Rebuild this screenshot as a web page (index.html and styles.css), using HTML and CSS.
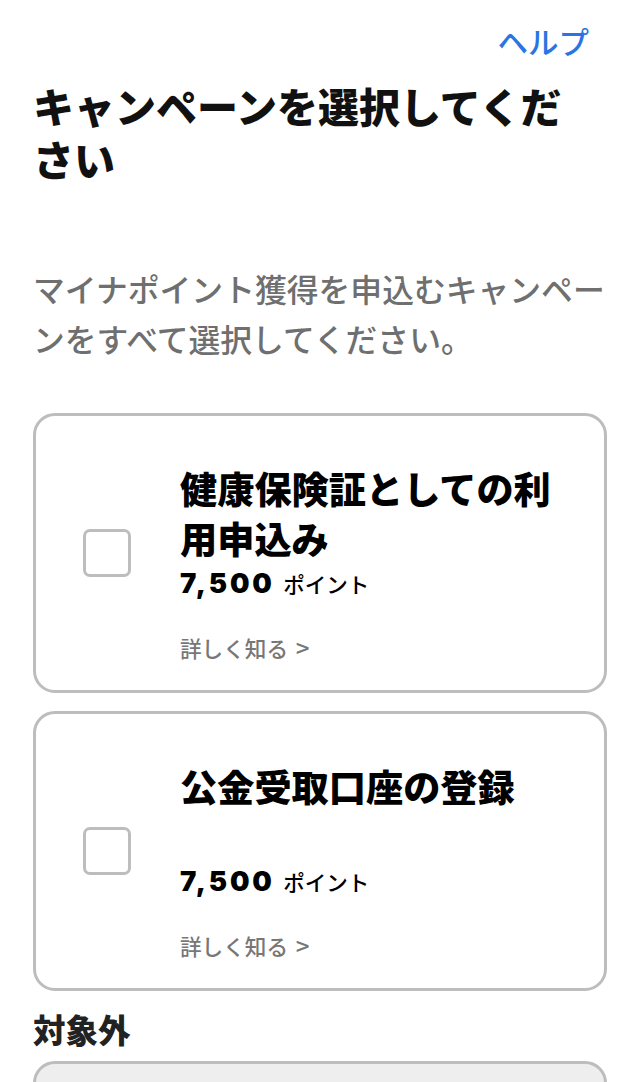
FILE: index.html
```html
<!DOCTYPE html>
<html lang="ja">
<head>
<meta charset="utf-8">
<title>キャンペーンを選択してください</title>
<link rel="stylesheet" href="styles.css">
</head>
<body>
<div class="page">
  <header class="topbar">
    <a class="help" href="#">ヘルプ</a>
  </header>
  <h1 class="page-title">キャンペーンを選択してください</h1>
  <p class="lead">マイナポイント獲得を申込むキャンペーンをすべて選択してください。</p>

  <ul class="campaigns">
    <li class="card">
      <span class="checkbox"></span>
      <div class="card-body">
        <div class="card-title">健康保険証としての利用申込み</div>
        <div class="points"><span class="num">7,500</span> <span class="unit">ポイント</span></div>
        <a class="more" href="#">詳しく知る <span class="chev">&gt;</span></a>
      </div>
    </li>
    <li class="card">
      <span class="checkbox"></span>
      <div class="card-body">
        <div class="card-title">公金受取口座の登録</div>
        <div class="points"><span class="num">7,500</span> <span class="unit">ポイント</span></div>
        <a class="more" href="#">詳しく知る <span class="chev">&gt;</span></a>
      </div>
    </li>
  </ul>

  <h2 class="section-title">対象外</h2>
  <div class="card card-disabled"></div>
</div>
</body>
</html>
```
FILE: styles.css
```css
* { box-sizing: border-box; }
html, body {
  margin: 0;
  padding: 0;
  background: #fff;
}
body {
  font-family: "Noto Sans CJK JP", "Noto Sans", sans-serif;
  color: #111;
  overflow: hidden;
}
.page {
  padding: 21px 32px 0 33px;
}
.topbar {
  display: flex;
  justify-content: flex-end;
}
.help {
  font-size: 30.5px;
  line-height: 40px;
  font-weight: 500;
  color: #2a74e3;
  text-decoration: none;
  margin-right: 18px;
}
.page-title {
  margin: 18px 0 0;
  padding-right: 20px;
  font-size: 41px;
  line-height: 53px;
  font-weight: 900;
  color: #111;
}
.lead {
  margin: 78px 0 0;
  font-size: 31.8px;
  line-height: 50px;
  color: #6f6f6f;
  font-weight: 500;
}
.campaigns {
  list-style: none;
  margin: 50px 0 0;
  padding: 0;
  display: flex;
  flex-direction: column;
  gap: 18px;
}
.card {
  border: 3px solid #bdbdbd;
  border-radius: 22px;
  background: #fff;
  display: flex;
  align-items: center;
  padding: 47px 30px 26px 47px;
}
.checkbox {
  flex: none;
  width: 48px;
  height: 48px;
  border: 3px solid #bdbdbd;
  border-radius: 7px;
  margin-right: 49px;
  margin-bottom: 21px;
}
.card-body {
  flex: 1;
  display: flex;
  flex-direction: column;
}
.card-title {
  font-size: 37.2px;
  line-height: 50px;
  min-height: 100px;
  font-weight: 900;
  color: #000;
}
.points {
  line-height: 40px;
  height: 40px;
  color: #000;
}
.num {
  font-family: Inter, "Noto Sans", sans-serif;
  font-size: 27.5px;
  font-weight: 900;
  letter-spacing: 2.8px;
}
.unit {
  font-size: 21.5px;
  font-weight: 500;
  margin-left: 5px;
}
.more {
  display: block;
  height: 32px;
  margin-top: 29px;
  font-size: 21.6px;
  line-height: 32px;
  color: #777;
  font-weight: 500;
  text-decoration: none;
}
.chev {
  margin-left: 3px;
  font-size: 24px;
  line-height: 1;
}
.section-title {
  margin: 14px 0 8px;
  font-size: 32.5px;
  line-height: 48px;
  font-weight: 900;
  color: #222;
}
.card-disabled {
  background: #eeeeee;
  height: 200px;
}
```
